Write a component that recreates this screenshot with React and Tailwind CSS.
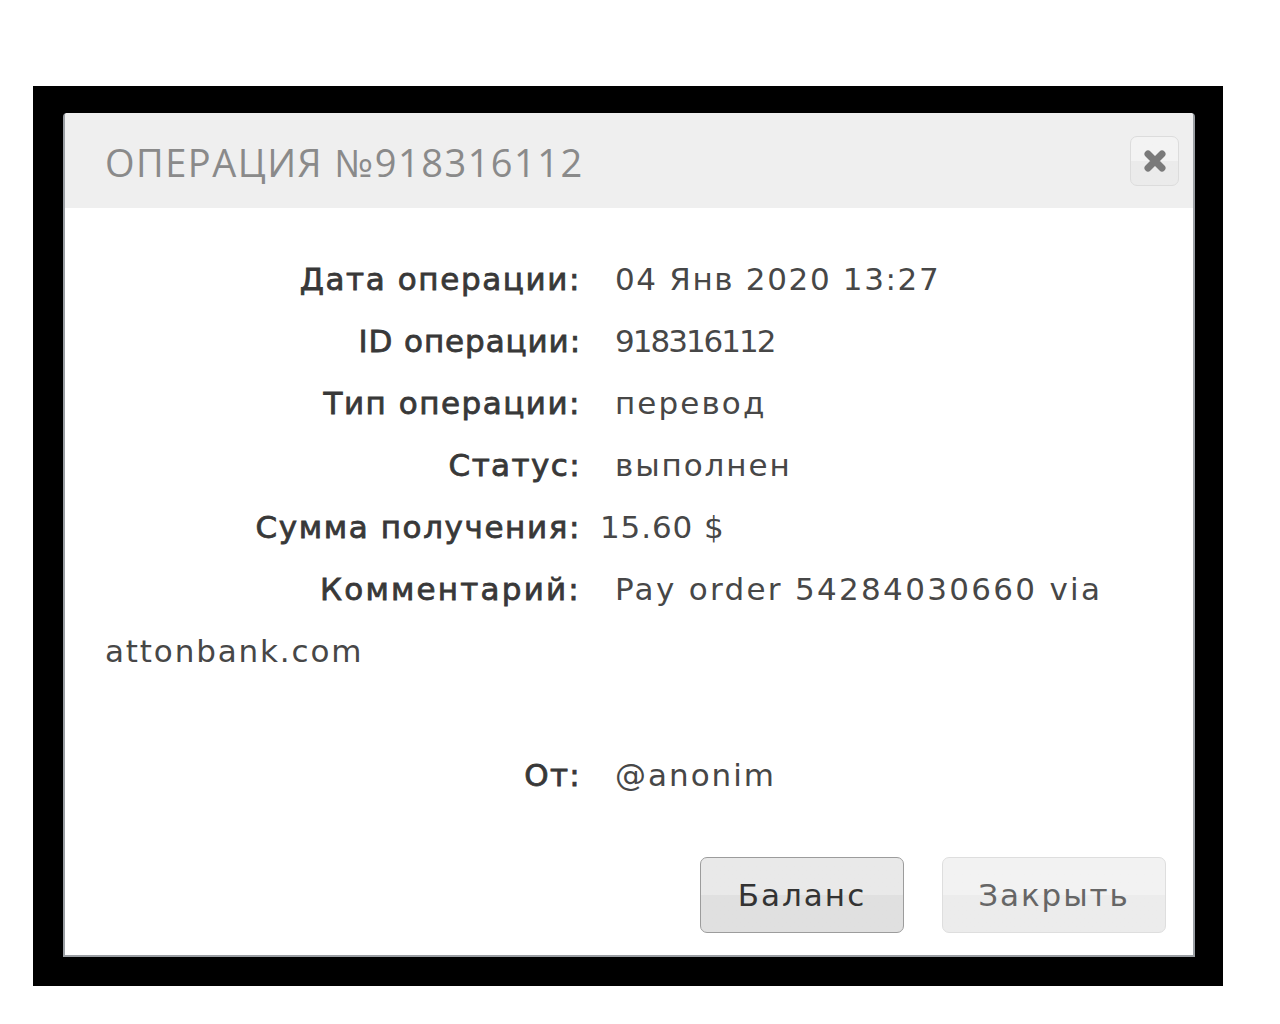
export default function App() {
  const lbl = "inline-block w-[476px] text-right text-[#383838] [-webkit-text-stroke:0.8px_#383838] -mr-[1px]";
  return (
    <div className="w-[1280px] h-[1024px] bg-white pt-[86px] pl-[33px]" style={{ fontFamily: '"DejaVu Sans", "Liberation Sans", sans-serif' }}>
      <div className="w-[1190px] h-[900px] bg-black pt-[27px] pl-[30px]">
        <div className="w-[1132px] h-[844px] bg-white rounded-t-[4px] border-x-2 border-b-2 border-[#9a9ea3] flex flex-col overflow-hidden">
          <div className="h-[95px] bg-[#efefef] flex items-center justify-between pl-[40px] pr-[14px] shrink-0">
            <div className="text-[38px] text-[#8a8a8a] tracking-[1.5px] leading-none pt-[2px]" style={{ fontFamily: '"Open Sans", sans-serif' }}>ОПЕРАЦИЯ №918316112</div>
            <div className="w-[49px] h-[50px] rounded-[7px] border border-[#dcdcdc] bg-gradient-to-b from-[#f3f3f3] from-50% to-[#ebebeb] to-50% flex items-center justify-center">
              <svg width="26" height="24" viewBox="0 0 26 24">
                <path d="M6 5 L20 19 M20 5 L6 19" stroke="#7a7a7a" strokeWidth="7" strokeLinecap="round" />
              </svg>
            </div>
          </div>
          <div className="pt-[40px] pl-[40px] pr-[20px] text-[31px] leading-[62px] text-[#474747] whitespace-nowrap">
            <div>
              <span className={`${lbl} tracking-[1.6px]`}>Дата операции:</span>
              <span className="ml-[35px] tracking-[1.65px]">04 Янв 2020 13:27</span>
            </div>
            <div>
              <span className={`${lbl} tracking-[0.9px]`}>ID операции:</span>
              <span className="ml-[35px] tracking-[-2px]">918316112</span>
            </div>
            <div>
              <span className={`${lbl} tracking-[1.5px]`}>Тип операции:</span>
              <span className="ml-[35px] tracking-[2.1px]">перевод</span>
            </div>
            <div>
              <span className={`${lbl} tracking-[1.4px]`}>Статус:</span>
              <span className="ml-[35px] tracking-[1.9px]">выполнен</span>
            </div>
            <div>
              <span className={`${lbl} tracking-[1.6px]`}>Сумма получения:</span>
              <span className="ml-[20px] tracking-[0.9px]">15.60 $</span>
            </div>
            <div>
              <span className={`${lbl} tracking-[2.2px]`}>Комментарий:</span>
              <span className="ml-[35px] tracking-[2.3px]">Pay order 54284030660 via</span>
              <br />
              <span className="tracking-[1.85px]">attonbank.com</span>
            </div>
            <div className="h-[62px]" />
            <div>
              <span className={`${lbl} tracking-[1.3px]`}>От:</span>
              <span className="ml-[35px] tracking-[2px]">@anonim</span>
            </div>
          </div>
          <div className="flex justify-end gap-[38px] pr-[27px] mt-[51px]">
            <button className="w-[204px] h-[76px] rounded-[7px] border border-[#9c9c9c] bg-gradient-to-b from-[#e9e9e9] from-50% to-[#e0e0e0] to-50% text-[31px] tracking-[2px] text-[#333]">Баланс</button>
            <button className="w-[224px] h-[76px] rounded-[7px] border border-[#dedede] bg-gradient-to-b from-[#f2f2f2] from-50% to-[#ececec] to-50% text-[31px] tracking-[1.9px] text-[#666]">Закрыть</button>
          </div>
        </div>
      </div>
    </div>
  );
}
